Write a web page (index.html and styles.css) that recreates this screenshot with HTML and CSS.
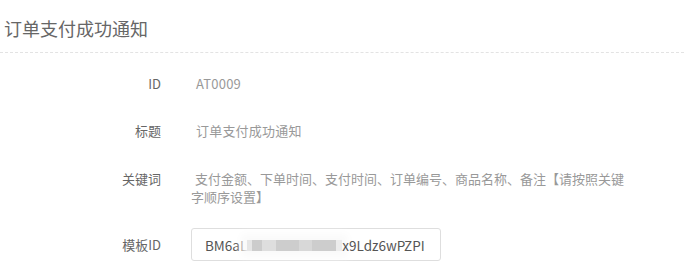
FILE: index.html
```html
<!DOCTYPE html>
<html lang="zh-CN">
<head>
<meta charset="utf-8">
<title>订单支付成功通知</title>
<link rel="stylesheet" href="styles.css">
</head>
<body>
<div class="panel">
  <div class="panel-head">订单支付成功通知</div>
  <div class="form">
    <div class="row">
      <div class="label">ID</div>
      <div class="value static">AT0009</div>
    </div>
    <div class="row">
      <div class="label">标题</div>
      <div class="value static">订单支付成功通知</div>
    </div>
    <div class="row row-tall">
      <div class="label">关键词</div>
      <div class="value keywords">支付金额、下单时间、支付时间、订单编号、商品名称、备注【请按照关键字顺序设置】</div>
    </div>
    <div class="row">
      <div class="label">模板ID</div>
      <div class="value">
        <div class="input"><span>BM6aL</span><span class="blur"></span><span>x9Ldz6wPZPI</span></div>
      </div>
    </div>
  </div>
</div>
</body>
</html>
```

FILE: styles.css
```css
html, body {
  margin: 0;
  padding: 0;
  background: #fff;
}
body {
  font-family: "Noto Sans CJK SC", "Noto Sans", sans-serif;
  color: #666;
}
.panel-head {
  font-size: 18px;
  line-height: 24px;
  padding: 16px 0 12px 4px;
  color: #666;
  border-bottom: 1px dashed #e3e3e3;
}
.form {
  display: flex;
  flex-direction: column;
  gap: 13px;
  padding-top: 14px;
}
.row {
  display: flex;
  align-items: flex-start;
  font-size: 13px;
  line-height: 18px;
}
.label {
  width: 161px;
  flex: 0 0 161px;
  text-align: right;
  padding: 8px 0;
  color: #666;
}
.row-tall .label {
  padding: 9px 0;
}
.value {
  margin-left: 30px;
  width: 440px;
  color: #999;
}
.static {
  padding: 8px 0 8px 5px;
  letter-spacing: 0.2px;
}
.keywords {
  padding: 9px 0;
  text-indent: 4px;
}
.input {
  box-sizing: border-box;
  width: 250px;
  height: 33px;
  border: 1px solid #dedede;
  border-radius: 3px;
  padding: 0 0 0 13px;
  display: flex;
  align-items: center;
  font-size: 13.5px;
  color: #555;
  white-space: nowrap;
}
.blur {
  display: inline-block;
  width: 95px;
  height: 11px;
  margin-top: 1px;
  background:
    linear-gradient(90deg,
      #e6e6e6 0, #e6e6e6 5px,
      #cccccc 5px, #cccccc 15px,
      #dedede 15px, #dedede 29px,
      #cdcdcd 29px, #cdcdcd 52px,
      #d8d8d8 52px, #d8d8d8 65px,
      #cdcdcd 65px, #cdcdcd 89px,
      #ececec 89px, #ececec 95px);
  box-shadow: 0 0 8px 6px #fafafa;
}
```
